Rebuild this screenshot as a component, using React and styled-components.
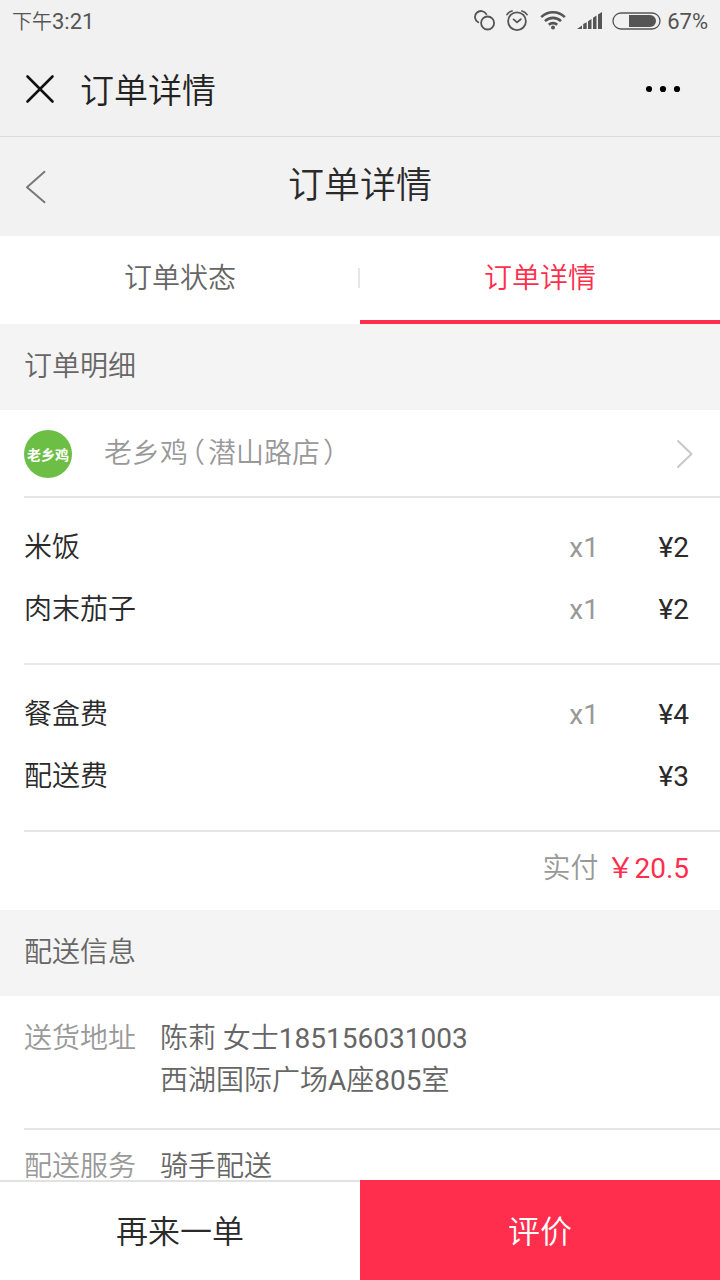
import React from "react";
import styled, { createGlobalStyle } from "styled-components";

const GlobalStyle = createGlobalStyle`
  *, *::before, *::after { box-sizing: border-box; }
  body {
    margin: 0;
    background: #fff;
    color: #2a2a2a;
    font-family: Roboto, "Noto Sans CJK SC", sans-serif;
    font-size: 28px;
    font-weight: 350;
  }
  button { font: inherit; color: inherit; background: none; border: 0; padding: 0; cursor: pointer; }
  a { color: inherit; text-decoration: none; }
  h1, h2, p, dl, dd, ul { margin: 0; padding: 0; font-weight: inherit; font-size: inherit; }
  svg { display: block; flex: none; }
`;

const Page = styled.div`
  display: flex;
  flex-direction: column;
  height: 100vh;
`;

const StatusBar = styled.div`
  display: flex;
  flex: none;
  align-items: center;
  justify-content: space-between;
  height: 42px;
  padding: 0 12px;
  background: #f1f1f1;
  color: #555;
  font-size: 22px;
`;

const Numerals = styled.span`
  font-weight: 400;
`;

const Time = styled.span`
  padding-bottom: 2px;
`;

const DayPeriod = styled.span`
  font-size: 20px;
`;

const StatusIcons = styled.div`
  display: flex;
  align-items: center;
  gap: 10px;
`;

const BatteryStatus = styled.div`
  display: flex;
  align-items: center;
  gap: 6px;
`;

const AppBar = styled.header`
  display: flex;
  flex: none;
  align-items: center;
  height: 95px;
  padding: 0 38px 0 24px;
  background: #f1f1f1;
  border-bottom: 1px solid #dcdcdc;
  color: #222;
`;

const AppTitle = styled.span`
  flex: 1;
  padding: 0 0 2px 24px;
  font-size: 34px;
`;

const NavBar = styled.div`
  display: grid;
  flex: none;
  grid-template-columns: 48px 1fr 48px;
  align-items: center;
  height: 99px;
  padding: 0 24px;
  background: #f2f2f2;
`;

const NavTitle = styled.h1`
  padding-bottom: 10px;
  text-align: center;
  font-size: 36px;
`;

const Tabs = styled.div`
  display: grid;
  flex: none;
  grid-template-columns: 1fr 1fr;
`;

const Tab = styled.button`
  height: 88px;
  padding-bottom: 4px;
  border-bottom: 4px solid ${(p) => (p.$active ? "#ff2e4d" : "transparent")};
  color: ${(p) => (p.$active ? "#ff2e4d" : "#666")};

  &:not(:last-child) {
    background: linear-gradient(#e6e6e6, #e6e6e6) no-repeat right 32px / 2px 20px;
  }
`;

const Content = styled.main`
  flex: 1;
  min-height: 0;
  overflow-y: auto;
  scrollbar-width: none;
`;

const SectionTitle = styled.h2`
  height: 86px;
  padding-left: 24px;
  background: #f4f4f4;
  color: #666;
  line-height: 86px;
`;

const StoreLink = styled.a`
  display: flex;
  align-items: center;
  height: 88px;
  margin-left: 24px;
  padding: 2px 26px 0 0;
  border-bottom: 2px solid #e6e6e6;
  color: #999;
`;

const StoreLogo = styled.span`
  display: flex;
  align-items: center;
  justify-content: center;
  width: 48px;
  height: 48px;
  border-radius: 50%;
  background: #6cbe45;
  color: #fff;
  font-size: 14px;
  font-weight: 700;
`;

const StoreName = styled.span`
  flex: 1;
  padding: 0 0 6px 32px;
`;

const Paren = styled.span`
  padding: 0 3px;
  font-feature-settings: "halt";
`;

const FeeList = styled.ul`
  margin-left: 24px;
  padding: 19px 31px 22px 0;
  border-bottom: 2px solid #e6e6e6;
  list-style: none;
`;

const FeeRow = styled.li`
  display: grid;
  grid-template-columns: 1fr auto 90px;
  line-height: 62px;
`;

const Quantity = styled(Numerals)`
  color: #999;
`;

const Price = styled(Numerals)`
  text-align: right;
`;

const Total = styled.p`
  display: flex;
  justify-content: flex-end;
  gap: 8px;
  height: 78px;
  padding-right: 31px;
  color: #999;
  line-height: 74px;
`;

const TotalPrice = styled(Numerals)`
  color: #ff2e4d;
`;

const InfoRow = styled.div`
  display: grid;
  grid-template-columns: 136px 1fr;
  margin-left: 24px;
  padding: 22px 24px 26px 0;
  border-bottom: 2px solid #e6e6e6;
  color: #666;
  line-height: 42px;

  & + & {
    padding-top: 16px;
  }
`;

const InfoLabel = styled.dt`
  color: #999;
`;

const Actions = styled.footer`
  display: grid;
  flex: none;
  grid-template-columns: 1fr 1fr;
  height: 100px;
`;

const Action = styled.button`
  padding-bottom: 4px;
  background: ${(p) => (p.$primary ? "#ff2e4d" : "#fff")};
  border-top: 2px solid ${(p) => (p.$primary ? "#ff2e4d" : "#e2e2e2")};
  color: ${(p) => (p.$primary ? "#fff" : "#2a2a2a")};
  font-size: 32px;
`;

const stroke = { fill: "none", stroke: "currentColor", strokeLinecap: "round", strokeLinejoin: "round" };

const LinkedCircles = () => (
  <svg width="22" height="22" viewBox="0 0 22 22" {...stroke} strokeWidth="1.8">
    <circle cx="13.6" cy="13" r="6.5" />
    <path d="M12.3 4.2A6 6 0 1 0 4.2 12.3" />
  </svg>
);

const AlarmClock = () => (
  <svg width="24" height="22" viewBox="0 0 24 22" {...stroke} strokeWidth="1.8">
    <circle cx="11" cy="11.2" r="8.9" />
    <path d="M7.6 9.4l3.4 3 3.8-3.2M1 4.6Q2.7 1.8 6 1M21 4.6Q19.3 1.8 16 1" />
  </svg>
);

const Wifi = () => (
  <svg width="26" height="20" viewBox="0 0 26 20" fill="none" stroke="currentColor" strokeWidth="2.6">
    <path d="M1.2 6.2a16.7 16.7 0 0 1 23.6 0M5 10.2a11.3 11.3 0 0 1 16 0M8.8 13.8a6 6 0 0 1 8.4 0" />
    <circle cx="13" cy="16.4" r="2" fill="currentColor" stroke="none" />
  </svg>
);

const Signal = () => (
  <svg width="26" height="18" viewBox="0 0 26 18" fill="currentColor">
    <path d="M1 17l5-3.4V17zM7.2 17v-5l3.5-1.8V17zM12 17V9.2L15.5 7v10zM17 17V5.8l3.5-2.2V17zM22 17V2.4L26 0v17z" />
  </svg>
);

const Battery = () => (
  <svg width="49" height="18" viewBox="0 0 49 18">
    <rect x="1" y="1" width="47" height="16" rx="8" fill="none" stroke="currentColor" strokeWidth="1.3" />
    <path d="M17 3h21a6 6 0 0 1 0 12H17z" fill="currentColor" />
  </svg>
);

const CloseIcon = () => (
  <svg width="32" height="32" viewBox="0 0 32 32" {...stroke} stroke="#111" strokeWidth="2.6">
    <path d="M3.5 3.5l25 25M28.5 3.5l-25 25" />
  </svg>
);

const MoreIcon = () => (
  <svg width="36" height="8" viewBox="0 0 36 8" fill="#000">
    <circle cx="3" cy="4" r="3.1" />
    <circle cx="17" cy="4" r="3.1" />
    <circle cx="31" cy="4" r="3.1" />
  </svg>
);

const BackIcon = () => (
  <svg width="24" height="34" viewBox="0 0 24 34" {...stroke} stroke="#777" strokeWidth="1.9">
    <path d="M20.5 1.8L3 17.3l17.5 15" />
  </svg>
);

const ForwardIcon = () => (
  <svg width="18" height="30" viewBox="0 0 18 30" {...stroke} stroke="#c8c8c8" strokeWidth="2">
    <path d="M2 2l13.5 13L2 28" />
  </svg>
);

const items = [
  { name: "米饭", quantity: "x1", price: "¥2" },
  { name: "肉末茄子", quantity: "x1", price: "¥2" },
];

const fees = [
  { name: "餐盒费", quantity: "x1", price: "¥4" },
  { name: "配送费", quantity: "", price: "¥3" },
];

const Fees = ({ rows }) => (
  <FeeList>
    {rows.map((row) => (
      <FeeRow key={row.name}>
        <span>{row.name}</span>
        <Quantity>{row.quantity}</Quantity>
        <Price>{row.price}</Price>
      </FeeRow>
    ))}
  </FeeList>
);

export default function App() {
  return (
    <Page>
      <GlobalStyle />
      <StatusBar>
        <Time><DayPeriod>下午</DayPeriod><Numerals>3:21</Numerals></Time>
        <StatusIcons>
          <LinkedCircles />
          <AlarmClock />
          <Wifi />
          <Signal />
          <BatteryStatus>
            <Battery />
            <Numerals>67%</Numerals>
          </BatteryStatus>
        </StatusIcons>
      </StatusBar>
      <AppBar>
        <button aria-label="关闭"><CloseIcon /></button>
        <AppTitle>订单详情</AppTitle>
        <button aria-label="更多"><MoreIcon /></button>
      </AppBar>
      <NavBar>
        <button aria-label="返回"><BackIcon /></button>
        <NavTitle>订单详情</NavTitle>
      </NavBar>
      <Tabs>
        <Tab>订单状态</Tab>
        <Tab $active>订单详情</Tab>
      </Tabs>
      <Content>
        <SectionTitle>订单明细</SectionTitle>
        <StoreLink href="#store">
          <StoreLogo>老乡鸡</StoreLogo>
          <StoreName>老乡鸡<Paren>（</Paren>潜山路店<Paren>）</Paren></StoreName>
          <ForwardIcon />
        </StoreLink>
        <Fees rows={items} />
        <Fees rows={fees} />
        <Total>
          <span>实付</span>
          <TotalPrice>￥20.5</TotalPrice>
        </Total>
        <SectionTitle>配送信息</SectionTitle>
        <dl>
          <InfoRow>
            <InfoLabel>送货地址</InfoLabel>
            <dd>
              陈莉 女士<Numerals>185156031003</Numerals>
              <br />
              西湖国际广场<Numerals>A</Numerals>座<Numerals>805</Numerals>室
            </dd>
          </InfoRow>
          <InfoRow>
            <InfoLabel>配送服务</InfoLabel>
            <dd>骑手配送</dd>
          </InfoRow>
        </dl>
      </Content>
      <Actions>
        <Action>再来一单</Action>
        <Action $primary>评价</Action>
      </Actions>
    </Page>
  );
}
